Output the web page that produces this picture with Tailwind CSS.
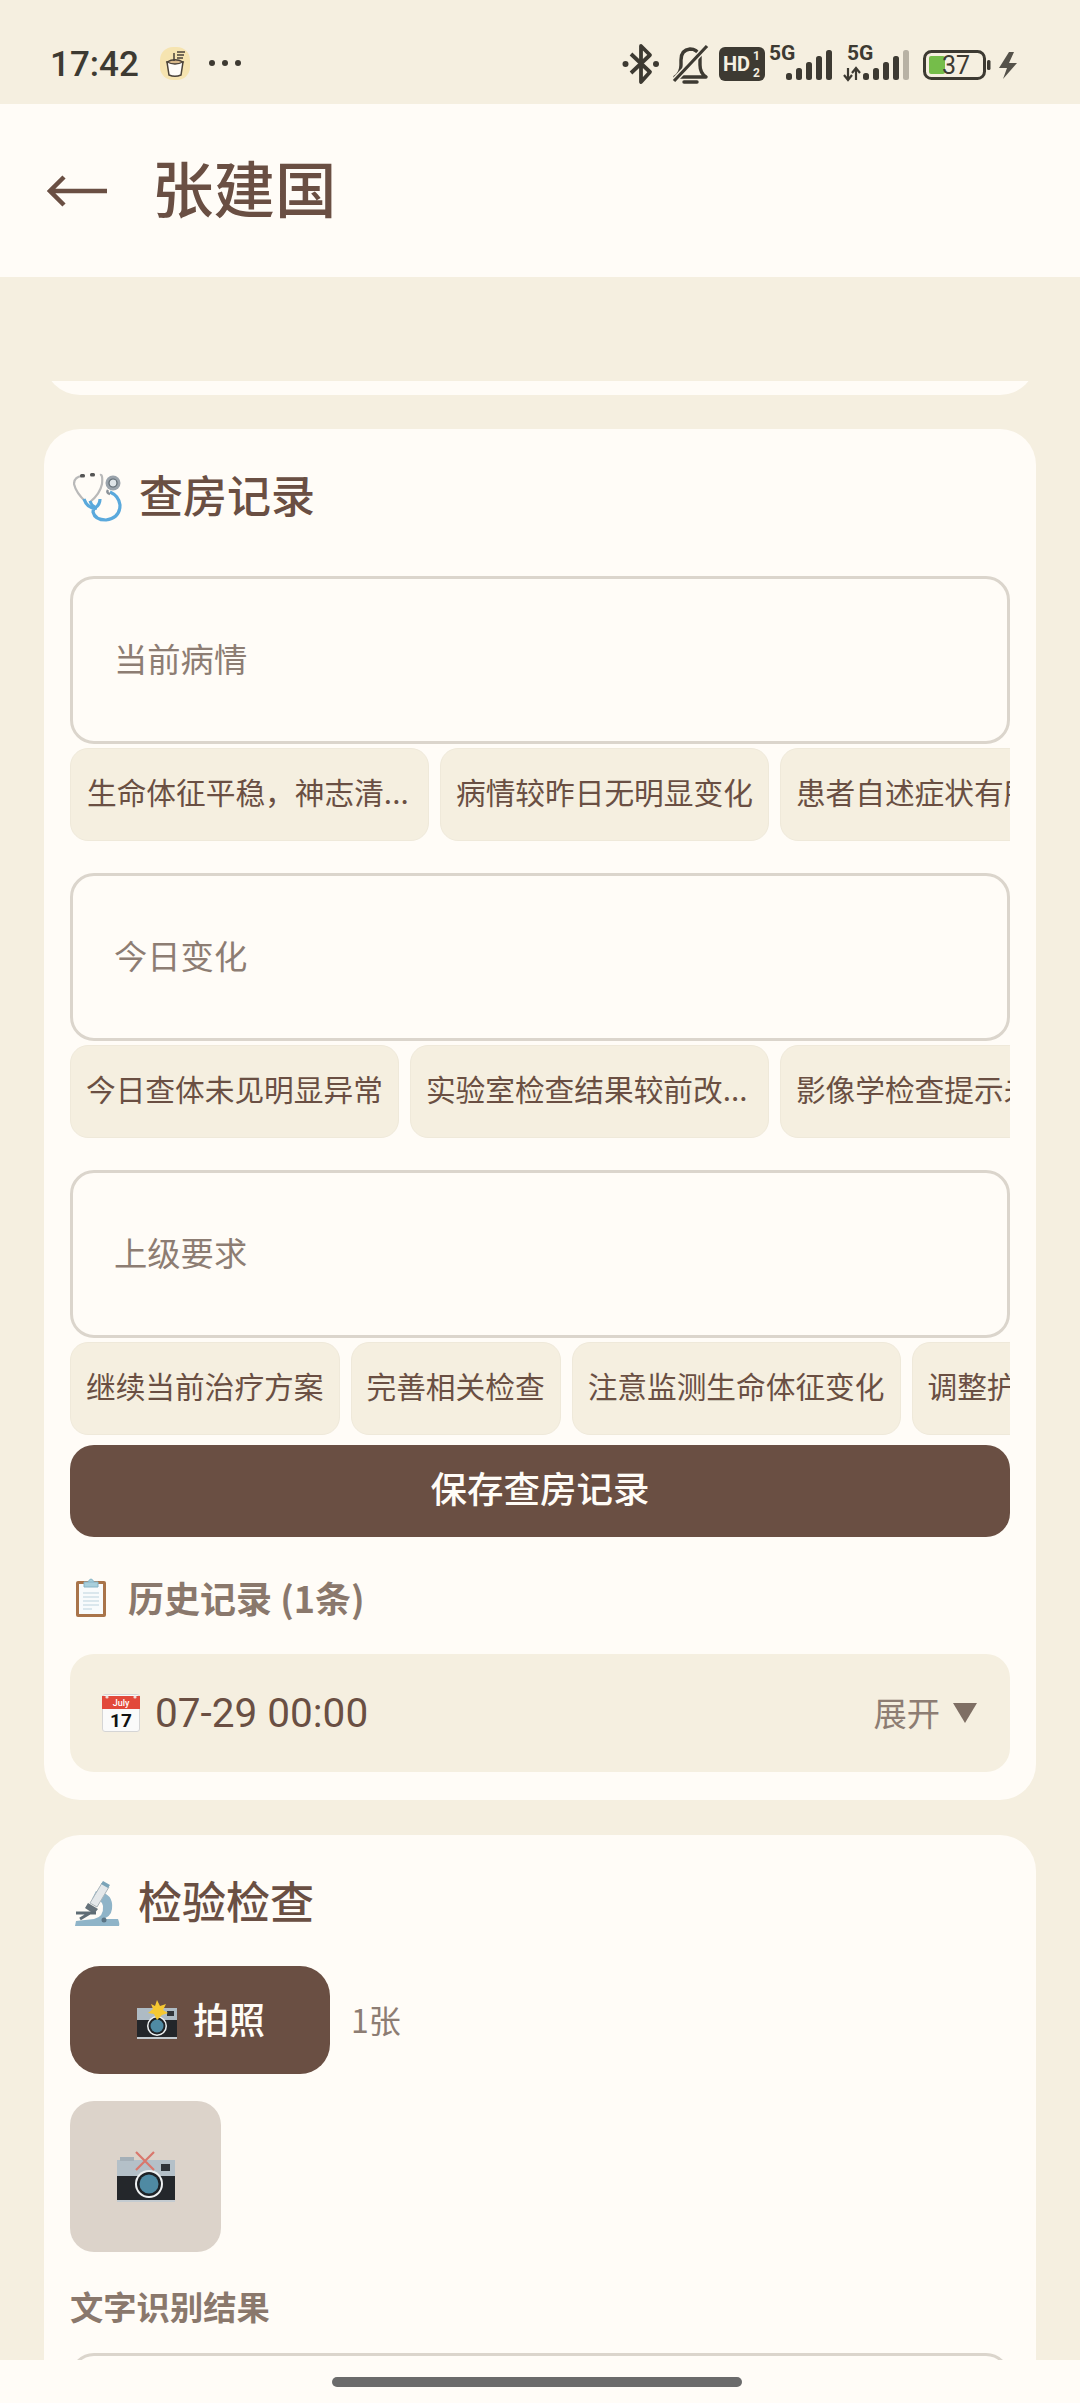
<!DOCTYPE html>
<html lang="zh">
<head>
<meta charset="utf-8">
<script src="https://cdn.jsdelivr.net/npm/@tailwindcss/browser@4"></script>
</head>
<body class="m-0 bg-[#f5efe0]">
<div class="relative w-[1080px] h-[2403px] overflow-hidden bg-[#f5efe0] text-[#6a4f43] font-['Noto_Sans_CJK_SC','Noto_Sans',sans-serif]">

  <!-- status bar -->
  <div class="h-[104px] flex items-center justify-between pl-[50px] pr-[60px] pt-[22px]">
    <div class="flex items-center">
      <span class="pt-[2px] font-['Roboto',sans-serif] font-medium text-[35px] leading-none text-[#3d3a32]">17:42</span>
      <svg class="ml-[21px] w-[30px] h-[33px]" viewBox="0 0 30 33">
        <rect x="0" y="0" width="30" height="33" rx="13" fill="#f6e4b0"/>
        <path d="M7 15 h16 l-2 13 q-6 2.5 -12 0z" fill="#fffdf8" stroke="#4a4238" stroke-width="1.5"/>
        <path d="M7 15 q8 -4.5 16 0 q-8 4 -16 0z" fill="#d9b98a" stroke="#4a4238" stroke-width="1.3"/>
        <path d="M14 14 V6 M17 5 h8 M17 8 h7 M17 11 h6" stroke="#4a4238" stroke-width="1.5" fill="none"/>
      </svg>
      <div class="ml-[19px] flex gap-[7px]">
        <span class="w-[6px] h-[6px] rounded-full bg-[#3d3a32]"></span>
        <span class="w-[6px] h-[6px] rounded-full bg-[#3d3a32]"></span>
        <span class="w-[6px] h-[6px] rounded-full bg-[#3d3a32]"></span>
      </div>
    </div>
    <svg class="w-[400px] h-[44px]" viewBox="0 0 400 44" fill="none">
      <!-- bluetooth -->
      <path d="M11 13 L30 31 L21 41 V5 L30 14 L11 32" stroke="#3d3a32" stroke-width="3.8" stroke-linejoin="round"/>
      <circle cx="5.5" cy="23" r="3" fill="#3d3a32"/><circle cx="36" cy="23" r="3" fill="#3d3a32"/>
      <!-- bell -->
      <path d="M55 36 q6 -4 6 -12 v-5 q0 -10 9 -11 q7 0 10 7 v9 q0 8 6 12z" stroke="#3d3a32" stroke-width="3.4" stroke-linejoin="round"/>
      <path d="M54 40 L86 6" stroke="#f5efe0" stroke-width="6"/>
      <path d="M54 40 L87 5" stroke="#3d3a32" stroke-width="3.2"/>
      <path d="M64 41 h13" stroke="#3d3a32" stroke-width="3.4" stroke-linecap="round"/>
      <!-- HD -->
      <rect x="99" y="6" width="46" height="34" rx="6" fill="#3d3a32"/>
      <text x="103" y="30" font-family="Roboto,sans-serif" font-weight="700" font-size="20" fill="#f5efe0">HD</text>
      <text x="133" y="19" font-family="Roboto,sans-serif" font-weight="700" font-size="12" fill="#f5efe0">1</text>
      <text x="133" y="36" font-family="Roboto,sans-serif" font-weight="700" font-size="12" fill="#f5efe0">2</text>
      <!-- 5G 1 -->
      <text x="149" y="19" font-family="Roboto,sans-serif" font-weight="700" font-size="21" fill="#3d3a32">5G</text>
      <g fill="#3d3a32">
        <rect x="166" y="32" width="6" height="7" rx="2.5"/><rect x="176" y="27" width="6" height="12" rx="2.5"/><rect x="186" y="21" width="6" height="18" rx="2.5"/><rect x="196" y="15" width="6" height="24" rx="2.5"/><rect x="206" y="9" width="6" height="30" rx="2.5"/>
      </g>
      <!-- 5G 2 -->
      <text x="227" y="19" font-family="Roboto,sans-serif" font-weight="700" font-size="21" fill="#3d3a32">5G</text>
      <path d="M228 27 v12 M224 34 l4 5 l4 -5 M236 39 v-12 M232 32 l4 -5 l4 5" stroke="#3d3a32" stroke-width="2.2"/>
      <g fill="#3d3a32">
        <rect x="243" y="32" width="6" height="7" rx="2.5"/><rect x="253" y="27" width="6" height="12" rx="2.5"/><rect x="263" y="21" width="6" height="18" rx="2.5"/><rect x="273" y="15" width="6" height="24" rx="2.5"/>
      </g>
      <rect x="283" y="9" width="6" height="30" rx="2.5" fill="#b8b2a4"/>
      <!-- battery -->
      <rect x="304.5" y="10.5" width="60" height="27" rx="7" stroke="#3d3a32" stroke-width="3"/>
      <rect x="309" y="15" width="16" height="18" rx="2" fill="#75bd4a"/>
      <text x="322" y="33" font-family="Roboto,sans-serif" font-size="25" fill="#3d3a32">37</text>
      <rect x="367" y="19" width="3.5" height="10" rx="1.5" fill="#3d3a32"/>
      <!-- bolt -->
      <path d="M389 11 L379 27 H387 L383 38 L397 22 H389 L394 11z" fill="#55524a"/>
    </svg>
  </div>

  <!-- header -->
  <div class="h-[173px] bg-[#fffcf7] flex items-center pl-[47px]">
    <svg class="w-[60px] h-[32px]" viewBox="0 0 60 32" fill="none" stroke="#6a4f43" stroke-width="4.5"><path d="M2 16 H60 M17 2 L3 16 L17 30"/></svg>
    <h1 class="ml-[45px] pb-[7px] text-[61.5px] leading-none font-medium">张建国</h1>
  </div>

  <main class="px-[44px]">
    <div class="mt-[104px] h-[14px] overflow-hidden flex items-end">
      <div class="w-full h-[72px] shrink-0 rounded-[36px] bg-[#fffcf7]"></div>
    </div>

    <!-- card 1 -->
    <section class="mt-[34px] rounded-[36px] bg-[#fffcf7] px-[26px] pt-[28px] pb-[28px]">
      <div class="h-[80px] flex items-center">
        <svg class="ml-[3px] w-[50px] h-[50px]" viewBox="0 0 50 50" fill="none">
          <path d="M9 4 Q1 5 1 12 Q3 21 13 30 M27 3 Q30 2 29 12 Q27 22 17 30" stroke="#b9b9b9" stroke-width="2.2"/>
          <rect x="7" y="2" width="5" height="3.4" rx="1.5" fill="#555"/><rect x="17" y="1" width="5" height="3.4" rx="1.5" fill="#555"/>
          <path d="M11 27 Q14 36 22 36 Q27 33 27 27 M24 36 Q20 36 20 40 Q22 48 33 48 Q47 46 47 33 Q46 24 37 20" stroke="#5aa9dc" stroke-width="3.2"/>
          <path d="M17 29 Q18 33 22 35" stroke="#5aa9dc" stroke-width="3"/>
          <circle cx="40" cy="11" r="7.5" fill="#9aa3ab"/><circle cx="40" cy="11" r="4" fill="#dfe5e8" stroke="#5c6870" stroke-width="1.2"/>
          <path d="M35 18 Q33 21 37 22" stroke="#8b9298" stroke-width="2.5"/>
        </svg>
        <h2 class="ml-[16px] pb-[6px] text-[44px] leading-none font-medium">查房记录</h2>
      </div>

      <div class="mt-[39px] h-[168px] rounded-[24px] border-[3px] border-[#dbd5cc] flex items-center pl-[41px] pb-[4px] text-[33.3px] text-[#8d7d73]">当前病情</div>
      <div class="mt-[4px] h-[93px] flex gap-[11px] overflow-hidden">
        <span class="shrink-0 w-[359px] rounded-[18px] bg-[#f5efe0] border border-[#efe9da] px-[16px] text-[29.7px] leading-[85px] whitespace-nowrap">生命体征平稳，神志清...</span>
        <span class="shrink-0 rounded-[18px] bg-[#f5efe0] border border-[#efe9da] px-[15px] text-[29.7px] leading-[85px]">病情较昨日无明显变化</span>
        <span class="shrink-0 rounded-[18px] bg-[#f5efe0] border border-[#efe9da] px-[15px] text-[29.7px] leading-[85px]">患者自述症状有所改善</span>
      </div>

      <div class="mt-[32px] h-[168px] rounded-[24px] border-[3px] border-[#dbd5cc] flex items-center pl-[41px] pb-[4px] text-[33.3px] text-[#8d7d73]">今日变化</div>
      <div class="mt-[4px] h-[93px] flex gap-[11px] overflow-hidden">
        <span class="shrink-0 rounded-[18px] bg-[#f5efe0] border border-[#efe9da] px-[15px] text-[29.7px] leading-[85px]">今日查体未见明显异常</span>
        <span class="shrink-0 w-[359px] rounded-[18px] bg-[#f5efe0] border border-[#efe9da] px-[15px] text-[29.7px] leading-[85px] whitespace-nowrap">实验室检查结果较前改...</span>
        <span class="shrink-0 rounded-[18px] bg-[#f5efe0] border border-[#efe9da] px-[15px] text-[29.7px] leading-[85px]">影像学检查提示未见异常</span>
      </div>

      <div class="mt-[32px] h-[168px] rounded-[24px] border-[3px] border-[#dbd5cc] flex items-center pl-[41px] pb-[4px] text-[33.3px] text-[#8d7d73]">上级要求</div>
      <div class="mt-[4px] h-[93px] flex gap-[11px] overflow-hidden">
        <span class="shrink-0 rounded-[18px] bg-[#f5efe0] border border-[#efe9da] px-[15px] text-[29.7px] leading-[85px]">继续当前治疗方案</span>
        <span class="shrink-0 rounded-[18px] bg-[#f5efe0] border border-[#efe9da] px-[15px] text-[29.7px] leading-[85px]">完善相关检查</span>
        <span class="shrink-0 rounded-[18px] bg-[#f5efe0] border border-[#efe9da] px-[15px] text-[29.7px] leading-[85px]">注意监测生命体征变化</span>
        <span class="shrink-0 rounded-[18px] bg-[#f5efe0] border border-[#efe9da] px-[15px] text-[29.7px] leading-[85px]">调整护理方案</span>
      </div>

      <div class="mt-[10px] h-[92px] rounded-[24px] bg-[#6a4f43] flex items-center justify-center pb-[6px] text-[36.5px] font-medium text-[#fffcf7]">保存查房记录</div>

      <div class="mt-[30px] h-[60px] flex items-center">
        <svg class="ml-[3px] w-[36px] h-[42px]" viewBox="0 0 36 42" fill="none">
          <rect x="3" y="5" width="30" height="36" rx="2" fill="#a9744a"/>
          <rect x="6" y="8" width="24" height="30" fill="#f8fbfc"/>
          <path d="M10 17 h16 M10 21 h16 M10 25 h16 M10 29 h16 M10 33 h9" stroke="#bcd3de" stroke-width="1.2"/>
          <path d="M11 6 h14 v5 h-14z M15 6 q3 -6 6 0" fill="#a8cfdc" stroke="#86b4c6" stroke-width="1"/>
        </svg>
        <h3 class="ml-[19px] text-[36px] leading-none font-semibold text-[#8a786c]">历史记录 (1条)</h3>
      </div>

      <div class="mt-[27px] h-[118px] rounded-[24px] bg-[#f5efe0] flex items-center justify-between pl-[32px] pr-[30px]">
        <div class="flex items-center">
          <svg class="w-[38px] h-[38px]" viewBox="0 0 38 38">
            <rect x="0.5" y="0.5" width="37" height="37" rx="2.5" fill="#fafafa" stroke="#d5d5d5"/>
            <rect x="0" y="2" width="38" height="13" fill="#e2493b"/>
            <circle cx="5" cy="3" r="1.6" fill="#f0dcd8"/><circle cx="33" cy="3" r="1.6" fill="#f0dcd8"/>
            <text x="19" y="12" text-anchor="middle" font-family="Roboto,sans-serif" font-size="9" font-weight="500" fill="#fff">July</text>
            <text x="19" y="33" text-anchor="middle" font-family="Roboto,sans-serif" font-size="19" font-weight="700" fill="#111">17</text>
          </svg>
          <span class="ml-[15px] font-['Roboto',sans-serif] text-[40.5px] leading-none">07-29 00:00</span>
        </div>
        <div class="flex items-center mr-[3px] text-[33.3px] text-[#8d7d73]">
          <span class="pb-[3px]">展开</span>
          <svg class="ml-[13px] w-[24px] h-[20px]" viewBox="0 0 24 20"><path d="M0 0 H24 L12 20z" fill="#7f6f64"/></svg>
        </div>
      </div>
    </section>

    <!-- card 2 -->
    <section class="mt-[35px] rounded-t-[36px] bg-[#fffcf7] px-[26px] pt-[28px] h-[600px]">
      <div class="h-[80px] flex items-center">
        <svg class="ml-[4px] w-[46px] h-[48px]" viewBox="0 0 46 48" fill="none">
          <path d="M22 12 Q40 14 38 30 Q37 38 28 40 L44 40 Q46 45 45 47 H1 L2 42 L20 40 Q30 38 29 27 Q28 20 18 20z" fill="#8fb4c8"/>
          <path d="M16 24 L28 4 L35 8 L23 28z" fill="#e4e8ea" stroke="#a9b4ba" stroke-width="1"/>
          <path d="M29 2 L36 6 L34 9 L27 5z" fill="#7ba4b8"/>
          <path d="M14 24 L24 30 L20 35 L11 29z" fill="#66727a"/>
          <path d="M2 34 L22 34 M6 40 L16 34" stroke="#5f6c74" stroke-width="3"/>
          <circle cx="30" cy="41" r="2.5" fill="#5b7585"/>
        </svg>
        <h2 class="ml-[18px] pb-[6px] text-[44px] leading-none font-medium">检验检查</h2>
      </div>

      <div class="mt-[23px] flex items-center">
        <div class="w-[260px] h-[108px] rounded-[30px] bg-[#6a4f43] flex items-center justify-center text-[36px] font-medium text-[#fffcf7]">
          <svg class="w-[44px] h-[40px]" viewBox="0 0 44 40">
            <rect x="2" y="8" width="40" height="13" fill="#aebbc4"/>
            <rect x="2" y="20" width="40" height="17" fill="#23262a"/>
            <rect x="2" y="37" width="40" height="2" fill="#c4cbd0"/>
            <rect x="32" y="11" width="7" height="5" fill="#30353a"/>
            <circle cx="22" cy="26" r="10" fill="#eef1f2"/><circle cx="22" cy="26" r="8.5" fill="#1e2226"/><circle cx="22" cy="26" r="6.5" fill="#4f8aa3"/>
            <path d="M22 0 L25 6 L31 4 L28 10 L33 13 L27 15 L22 20 L19 14 L13 13 L18 9 L16 4 L20 6z" fill="#f5c832"/>
          </svg>
          <span class="ml-[14px] pb-[4px]">拍照</span>
        </div>
        <span class="ml-[21px] pb-[2px] text-[32px] text-[#8d7d73]">1张</span>
      </div>

      <div class="mt-[27px] w-[151px] h-[151px] rounded-[24px] bg-[#dcd3ca] flex items-center justify-center">
        <svg class="w-[60px] h-[52px]" viewBox="0 0 60 52">
          <rect x="1" y="9" width="58" height="17" fill="#b4c0c8"/>
          <rect x="4" y="6" width="14" height="4" fill="#a5b0b8"/>
          <rect x="1" y="25" width="58" height="24" fill="#24272b"/>
          <rect x="1" y="49" width="58" height="2" fill="#c4cbd0"/>
          <rect x="45" y="13" width="9" height="7" fill="#30353a"/>
          <circle cx="33" cy="33" r="14" fill="#eef1f2"/><circle cx="33" cy="33" r="12" fill="#1e2226"/><circle cx="33" cy="33" r="9.5" fill="#4f8aa3"/>
          <path d="M20 1 L38 19 M38 1 L20 19" stroke="#d9776c" stroke-width="2.2"/>
        </svg>
      </div>

      <h4 class="mt-[31px] text-[33.3px] leading-[46px] font-semibold text-[#8a786c]">文字识别结果</h4>
      <div class="mt-[24px] h-[100px] rounded-[24px] border-[3px] border-[#dbd5cc]"></div>
    </section>
  </main>

  <!-- bottom gesture bar -->
  <div class="absolute left-0 right-0 bottom-0 h-[43px] bg-[#fffcf7] flex justify-center pt-[17px]">
    <div class="mr-[7px] w-[410px] h-[10px] rounded-[5px] bg-[#6b6b6b]"></div>
  </div>
</div>
</body>
</html>
